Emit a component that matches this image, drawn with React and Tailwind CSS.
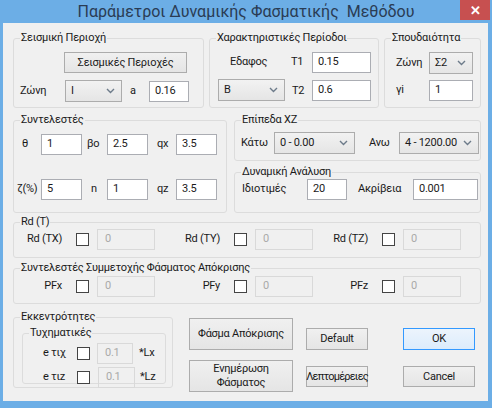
import React from "react";

const TextBox = ({ className = "", value }) => (
  <div className={`h-[21px] bg-white border border-[#abadb3] flex items-center pl-[5px] shrink-0 ${className}`}>
    {value}
  </div>
);

const Disabled = ({ className = "", value }) => (
  <div className={`h-[21px] border border-[#d9d9d9] flex items-center pl-[7px] text-[#a9a9a9] shrink-0 ${className}`}>
    {value}
  </div>
);

const Combo = ({ className = "", value }) => (
  <div
    className={`h-[22px] border border-[#acacac] bg-linear-to-b from-[#f2f2f2] to-[#e5e5e5] flex items-center justify-between pl-[5px] pr-[6px] whitespace-nowrap shrink-0 ${className}`}
  >
    <span>{value}</span>
    <svg width="9" height="6" viewBox="0 0 9 6">
      <path d="M1 1 L4.5 4.5 L8 1" fill="none" stroke="#6d7b8a" strokeWidth="1.4" />
    </svg>
  </div>
);

const Check = () => <div className="w-[13px] h-[13px] border border-[#444] bg-white shrink-0" />;

const Button = ({ className = "", children, def }) => (
  <div
    className={`flex items-center justify-center text-center leading-[14px] whitespace-nowrap border ${
      def
        ? "border-[#3399ff] bg-linear-to-b from-[#ecf4fc] to-[#dcecfc]"
        : "border-[#acacac] bg-linear-to-b from-[#f0f0f0] to-[#e5e5e5]"
    } ${className}`}
  >
    {children}
  </div>
);

const Group = ({ title, className = "", children }) => (
  <fieldset className={`border border-[#dcdcdc] rounded-[3px] min-w-0 shrink-0 ${className}`}>
    <legend className="ml-[6px] px-[1px] leading-[14px]">{title}</legend>
    {children}
  </fieldset>
);

const Cell = ({ className = "", label }) => (
  <div className={`flex items-center ${className}`}>
    <span className="flex-1 text-right pr-[14px]">{label}</span>
    <Check />
    <Disabled className="ml-[8px] w-[58px]" value="0" />
  </div>
);

export default function App() {
  return (
    <div className="w-[492px] h-[408px] bg-[#6caee6] flex flex-col font-['Roboto',sans-serif] text-[11px] tracking-[-0.25px] text-[#1a1a1a]">
      {/* title bar */}
      <div className="h-[23px] grid grid-cols-[1fr_auto_1fr] items-start">
        <div />
        <div className="pt-[2px] text-[16px] tracking-[0px] leading-[20px] text-[#2a3c54] whitespace-nowrap">
          Παράμετροι Δυναμικής Φασματικής &nbsp;Μεθόδου
        </div>
        <div className="flex justify-end pr-[2px]">
          <div className="w-[30px] h-[20px] bg-[#c75050] flex items-center justify-center text-white text-[13px] font-bold leading-none">
            ✕
          </div>
        </div>
      </div>

      {/* body */}
      <div className="ml-[3px] w-[485px] h-[378px] bg-[#f0f0f0] pl-[10px] pt-[8px] flex flex-col">
        {/* row 1 */}
        <div className="flex gap-[5px]">
          <Group title="Σεισμική Περιοχή" className="w-[191px] h-[77px]">
            <Button className="ml-[50px] mt-[7px] w-[123px] h-[21px]">Σεισμικές Περιοχές</Button>
            <div className="flex items-center mt-[7px] pl-[6px]">
              <span className="w-[45px]">Ζώνη</span>
              <Combo className="w-[57px]" value="I" />
              <span className="ml-[8px] w-[19px]">a</span>
              <TextBox className="w-[40px]" value="0.16" />
            </div>
          </Group>

          <Group title="Χαρακτηριστικές Περίοδοι" className="w-[170px] h-[77px]">
            <div className="flex items-center mt-[7px] pl-[20px]">
              <span className="w-[61px]">Εδαφος</span>
              <span className="w-[21px]">T1</span>
              <TextBox className="w-[59px]" value="0.15" />
            </div>
            <div className="flex items-center mt-[6px] pl-[8px]">
              <Combo className="w-[67px]" value="B" />
              <span className="ml-[7px] w-[20px] pt-[2px]">T2</span>
              <TextBox className="w-[59px]" value="0.6" />
            </div>
          </Group>

          <Group title="Σπουδαιότητα" className="w-[97px] h-[77px]">
            <div className="flex items-center mt-[7px] pl-[11px]">
              <span className="w-[33px]">Ζώνη</span>
              <Combo className="w-[44px]" value="Σ2" />
            </div>
            <div className="flex items-center mt-[6px] pl-[11px]">
              <span className="w-[33px]">γi</span>
              <TextBox className="w-[44px]" value="1" />
            </div>
          </Group>
        </div>

        {/* row 2 */}
        <div className="flex gap-[7px] mt-[5px]">
          <Group title="Συντελεστές" className="w-[214px] h-[100px]">
            <div className="flex items-center mt-[7px] pl-[8px]">
              <span className="w-[19px]">θ</span>
              <TextBox className="w-[41px]" value="1" />
              <span className="pl-[5px] w-[25px]">βο</span>
              <TextBox className="w-[41px]" value="2.5" />
              <span className="pl-[9px] w-[28px]">qx</span>
              <TextBox className="w-[41px]" value="3.5" />
            </div>
            <div className="flex items-center mt-[24px] pl-[3px]">
              <span className="w-[24px]">ζ(%)</span>
              <TextBox className="w-[41px]" value="5" />
              <span className="pl-[9px] w-[25px]">n</span>
              <TextBox className="w-[41px]" value="1" />
              <span className="pl-[9px] w-[28px]">qz</span>
              <TextBox className="w-[41px]" value="3.5" />
            </div>
          </Group>

          <div className="flex flex-col gap-[4px] w-[247px]">
            <Group title="Επίπεδα XZ" className="w-[247px] h-[48px]">
              <div className="flex items-center mt-[5px] pl-[6px]">
                <span className="w-[33px]">Κάτω</span>
                <Combo className="w-[81px]" value="0 - 0.00" />
                <span className="pl-[14px] w-[44px]">Ανω</span>
                <Combo className="w-[80px]" value="4 - 1200.00" />
              </div>
            </Group>
            <Group title="Δυναμική Ανάλυση" className="w-[247px] h-[48px]">
              <div className="flex items-center pl-[7px]">
                <span className="w-[65px]">Ιδιοτιμές</span>
                <TextBox className="w-[40px]" value="20" />
                <span className="pl-[11px] w-[66px]">Ακρίβεια</span>
                <TextBox className="w-[65px]" value="0.001" />
              </div>
            </Group>
          </div>
        </div>

        {/* Rd */}
        <Group title="Rd (T)" className="w-[468px] h-[43px] mt-[2px]">
          <div className="flex items-center">
            <Cell className="w-[141px]" label="Rd (TX)" />
            <Cell className="w-[158px]" label="Rd (TY)" />
            <Cell className="w-[148px]" label="Rd (TZ)" />
          </div>
        </Group>

        {/* PF */}
        <Group title="Συντελεστές Συμμετοχής Φάσματος Απόκρισης" className="w-[468px] h-[43px] mt-[3px]">
          <div className="flex items-center mt-[1px]">
            <Cell className="w-[141px]" label="PFx" />
            <Cell className="w-[158px]" label="PFy" />
            <Cell className="w-[148px]" label="PFz" />
          </div>
        </Group>

        {/* bottom */}
        <div className="flex mt-[6px]">
          <Group title="Εκκεντρότητες" className="w-[160px] h-[78px]">
            <Group title="Τυχηματικές" className="ml-[8px] mt-[2px] w-[144px] h-[58px]">
              <div className="flex items-center mt-[3px] pl-[20px]">
                <span className="w-[34px]">e τιχ</span>
                <Check />
                <Disabled className="ml-[7px] w-[36px] h-[20px]" value="0.1" />
                <span className="ml-[6px]">*Lx</span>
              </div>
              <div className="flex items-center mt-[3px] pl-[20px]">
                <span className="w-[34px]">e τιz</span>
                <Check />
                <Disabled className="ml-[8px] w-[37px] h-[20px]" value="0.1" />
                <span className="ml-[5px]">*Lz</span>
              </div>
            </Group>
          </Group>

          <div className="ml-[16px] mt-[8px] flex flex-col gap-[10px] w-[104px]">
            <Button className="h-[32px]">Φάσμα Απόκρισης</Button>
            <Button className="h-[32px]">
              Ενημέρωση
              <br />
              Φάσματος
            </Button>
          </div>

          <div className="ml-[13px] mt-[18px] flex flex-col gap-[16px] w-[62px]">
            <Button className="h-[22px]">Default</Button>
            <Button className="h-[21px] tracking-[-0.8px]">Λεπτομέρειες</Button>
          </div>

          <div className="ml-[35px] mt-[18px] flex flex-col gap-[16px] w-[72px]">
            <Button def className="h-[22px]">OK</Button>
            <Button className="h-[21px]">Cancel</Button>
          </div>
        </div>
      </div>
    </div>
  );
}
